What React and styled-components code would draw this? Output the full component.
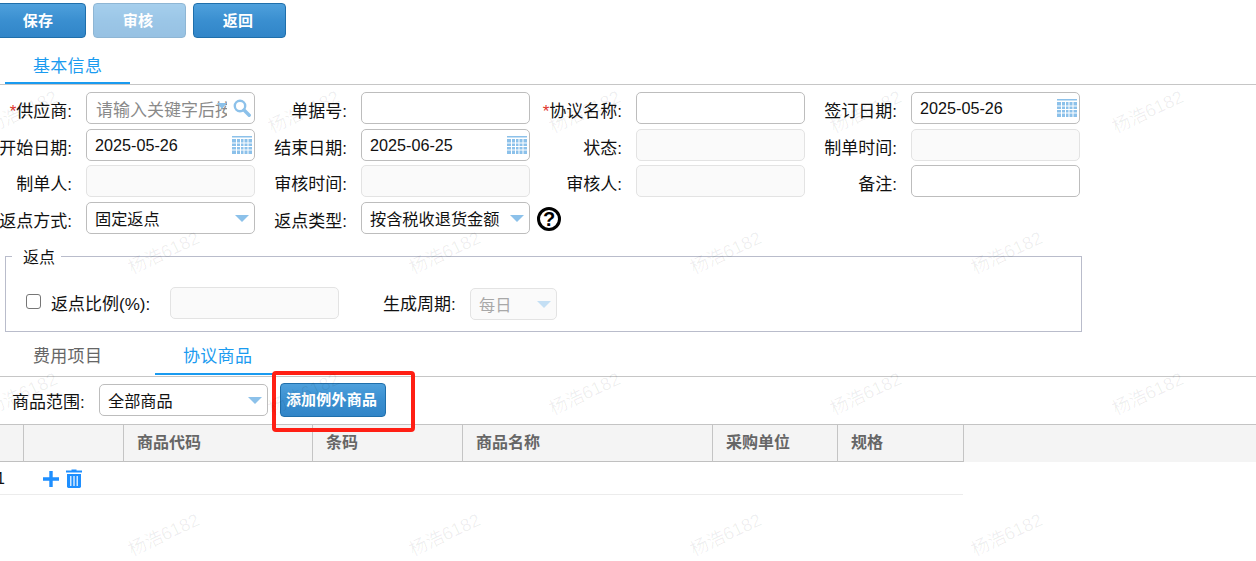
import React from "react";
import styled, { createGlobalStyle } from "styled-components";

const Global = createGlobalStyle`
  html, body { margin: 0; padding: 0; background: #fff; }
  body { font-family: "Liberation Sans", "Noto Sans CJK SC", sans-serif; font-size: 16px; color: #111; }
`;

const Page = styled.div`
  position: relative;
  width: 1256px;
  height: 561px;
  overflow: hidden;
  background: #fff;
`;

const Toolbar = styled.div`
  display: flex;
  gap: 7px;
  padding-top: 3px;
  margin-left: -7px;
`;

const ActionButton = styled.button`
  width: ${(p) => p.$width || 93}px;
  height: ${(p) => p.$height || 35}px;
  padding: 0 3px 3px 0;
  border: 1px solid #1f6fab;
  border-radius: 4px;
  background: linear-gradient(#4ea0dc, #3a8fd0 50%, #3185c8);
  color: #fff;
  font: bold 15px "Liberation Sans", "Noto Sans CJK SC", sans-serif;
  letter-spacing: 0.2px;
  white-space: nowrap;
  opacity: ${(p) => (p.disabled ? 0.5 : 1)};
`;

const TabBar = styled.div`
  display: flex;
  gap: 25px;
  height: ${(p) => p.$height}px;
  padding-left: 5px;
  padding-bottom: ${(p) => p.$lift || 0}px;
  align-items: flex-end;
  border-bottom: 1px solid #c6c6c6;
  box-sizing: border-box;
`;

const Tab = styled.div`
  width: 125px;
  height: 32px;
  box-sizing: border-box;
  padding-left: 28px;
  line-height: ${(p) => p.$line || 27}px;
  font-size: 17px;
  letter-spacing: 0.3px;
  white-space: nowrap;
  color: ${(p) => (p.$active ? "#1a9bf0" : "#666")};
  border-bottom: 2px solid ${(p) => (p.$active ? "#1a9bf0" : "transparent")};
`;

const FormGrid = styled.div`
  display: grid;
  grid-template-columns: repeat(4, 275px);
  grid-template-rows: 37px 36px 37px 32px;
  margin-top: 7px;
`;

const Field = styled.div`
  display: flex;
  align-items: flex-start;
`;

const Label = styled.div`
  width: 72px;
  margin-right: 14px;
  padding-top: 7px;
  line-height: 26px;
  font-size: 17px;
  white-space: nowrap;
  flex: none;
  display: flex;
  justify-content: flex-end;
`;

const Required = styled.span`
  color: #e0352b;
`;

const Box = styled.div`
  width: ${(p) => p.$width || 169}px;
  height: 32px;
  box-sizing: border-box;
  flex: none;
  display: flex;
  align-items: center;
  justify-content: space-between;
  padding: 0 5px 0 8px;
  border: 1px solid ${(p) => (p.$disabled ? "#e3e3e3" : "#bdbdbd")};
  border-radius: 5px;
  background: ${(p) => (p.$disabled ? "#fafafa" : "#fff")};
  color: ${(p) => (p.$disabled ? "#a8a8a8" : "#111")};
  font-size: 16.2px;
  white-space: nowrap;
`;

const DateText = styled.span`
  padding-top: 1px;
`;

const Placeholder = styled.span`
  width: 131px;
  overflow: hidden;
  margin-left: 1px;
  color: #8a8a8a;
  font-size: 17px;
`;

const SearchCluster = styled.span`
  position: relative;
  display: flex;
  align-items: center;
  margin-right: -2px;
`;

const HiddenArrow = styled.span`
  position: absolute;
  left: -16px;
  top: 4px;
  width: 0;
  height: 0;
  border-left: 5px solid transparent;
  border-right: 5px solid transparent;
  border-top: 6px solid #8cc1ea;
`;

const Arrow = styled.span`
  width: 0;
  height: 0;
  border-left: 7px solid transparent;
  border-right: 7px solid transparent;
  border-top: 7px solid ${(p) => (p.$faded ? "#c4dff4" : "#8cc1ea")};
`;

const Help = styled.span`
  width: 24px;
  height: 24px;
  box-sizing: border-box;
  flex: none;
  margin: 5px 0 0 7px;
  display: flex;
  align-items: center;
  justify-content: center;
  border: 3px solid #000;
  border-radius: 50%;
  font-weight: bold;
  font-size: 20px;
  color: #000;
`;

const RebateSet = styled.fieldset`
  width: 1077px;
  height: 88px;
  box-sizing: border-box;
  margin: 10px 0 0 5px;
  padding: 0;
  border: 1px solid #b9bccb;
  min-inline-size: 0;
`;

const RebateLegend = styled.legend`
  margin-left: 6px;
  padding: 4px 6px 0 11px;
  line-height: 20px;
  font-size: 16px;
`;

const RebateRow = styled.div`
  display: flex;
  align-items: flex-start;
  margin-top: 19px;
  padding-left: 20px;
`;

const Check = styled.input`
  appearance: none;
  width: 15px;
  height: 15px;
  margin: 7px 10px 0 0;
  flex: none;
  border: 1.5px solid #767676;
  border-radius: 3px;
  background: #fff;
`;

const RebateLabel = styled.div`
  width: ${(p) => p.$width}px;
  margin-left: ${(p) => p.$left || 0}px;
  margin-right: ${(p) => p.$gap}px;
  line-height: 22px;
  padding-top: 7px;
  font-size: 17px;
  white-space: nowrap;
`;

const CycleSelect = styled(Box)`
  margin-top: 1px;
`;

const FilterRow = styled.div`
  display: flex;
  align-items: flex-start;
  height: 47px;
  padding: 6px 0 0 12px;
  box-sizing: border-box;
`;

const FilterLabel = styled.div`
  width: 72px;
  margin-right: 15px;
  padding-top: 7px;
  line-height: 26px;
  font-size: 17px;
  white-space: nowrap;
`;

const FilterSelect = styled(Box)`
  margin: 1px 12px 0 0;
`;

const FilterButton = styled(ActionButton)`
  padding-left: 0;
`;

const HeaderBar = styled.div`
  display: flex;
  height: 38px;
  box-sizing: border-box;
  background: #f4f4f4;
  border-top: 1px solid #c4c4c4;
`;

const HeaderCell = styled.div`
  width: ${(p) => p.$w}px;
  flex: none;
  box-sizing: border-box;
  padding-left: 13px;
  line-height: 36px;
  font-weight: bold;
  color: #666;
  border-right: 1px solid #c4c4c4;
  border-bottom: 1px solid #c0c0c0;
`;

const DataRow = styled.div`
  display: flex;
  align-items: center;
  width: 963px;
  height: 33px;
  padding-top: 1px;
  box-sizing: border-box;
  border-bottom: 1px solid #ececec;
`;

const RowIndex = styled.div`
  width: 47px;
  margin-left: -4px;
  flex: none;
  font-size: 16px;
`;

const RowIcons = styled.div`
  display: flex;
  align-items: center;
  gap: 7px;
`;

const Highlight = styled.div`
  position: absolute;
  left: 272px;
  top: 371px;
  width: 143px;
  height: 61px;
  box-sizing: border-box;
  border: 4px solid #ff1f14;
  border-radius: 4px;
  pointer-events: none;
`;

const Watermark = styled.div`
  position: absolute;
  transform: translate(-50%, -50%) rotate(-25deg);
  font-size: 18px;
  white-space: nowrap;
  color: rgba(0, 0, 0, 0.065);
  pointer-events: none;
`;

const CalendarSvg = styled.svg`
  margin-right: -3px;
  flex: none;
`;

const CalendarIcon = () => (
  <CalendarSvg width="20" height="18" viewBox="0 0 20 18">
    <rect x="0" y="0" width="20" height="1.5" fill="#8cc1ea" />
    <rect x="0" y="3" width="20" height="15" fill="#8cc1ea" />
    <path d="M4.5 3v15M8.5 3v15M12 3v15M16 3v15M0 7h20M0 10.5h20M0 14h20" stroke="#fff" strokeWidth="1" />
  </CalendarSvg>
);

const SearchIcon = () => (
  <svg width="18" height="18" viewBox="0 0 18 18" fill="none">
    <circle cx="7" cy="7" r="5.2" stroke="#8cc1ea" strokeWidth="2.4" />
    <path d="M11 11l5.2 5.2" stroke="#8cc1ea" strokeWidth="3.4" strokeLinecap="round" />
  </svg>
);

const PlusIcon = () => (
  <svg width="16" height="16" viewBox="0 0 16 16">
    <path d="M8 0v16M0 8h16" stroke="#1e8fff" strokeWidth="3.4" />
  </svg>
);

const TrashIcon = () => (
  <svg width="16" height="19" viewBox="0 0 16 19">
    <path d="M5.5 1.5V.6h5v.9H16v2H0v-2z" fill="#1e8fff" />
    <path d="M1 5h14v12.6a1.4 1.4 0 0 1-1.4 1.4H2.4A1.4 1.4 0 0 1 1 17.6z" fill="#1e8fff" />
    <path d="M4.8 7v10M8 7v10M11.2 7v10" stroke="#fff" strokeWidth="1.2" />
  </svg>
);

const marks = [
  ...[21, 303, 584, 865, 1147].flatMap((x) => [[x, 110], [x, 392]]),
  ...[163, 444, 725, 1006].flatMap((x) => [[x, 251], [x, 533]]),
];

const columns = [
  [24, ""],
  [100, ""],
  [189, "商品代码"],
  [150, "条码"],
  [250, "商品名称"],
  [125, "采购单位"],
  [126, "规格"],
];

export default function App() {
  return (
    <Page>
      <Global />
      <Toolbar>
        <ActionButton>保存</ActionButton>
        <ActionButton disabled>审核</ActionButton>
        <ActionButton>返回</ActionButton>
      </Toolbar>
      <TabBar $height={47}>
        <Tab $active $line={29}>基本信息</Tab>
      </TabBar>
      <FormGrid>
        <Field>
          <Label><Required>*</Required>供应商:</Label>
          <Box>
            <Placeholder>请输入关键字后按键</Placeholder>
            <SearchCluster><HiddenArrow /><SearchIcon /></SearchCluster>
          </Box>
        </Field>
        <Field><Label>单据号:</Label><Box /></Field>
        <Field><Label><Required>*</Required>协议名称:</Label><Box /></Field>
        <Field><Label>签订日期:</Label><Box><DateText>2025-05-26</DateText><CalendarIcon /></Box></Field>

        <Field><Label>开始日期:</Label><Box><DateText>2025-05-26</DateText><CalendarIcon /></Box></Field>
        <Field><Label>结束日期:</Label><Box><DateText>2025-06-25</DateText><CalendarIcon /></Box></Field>
        <Field><Label>状态:</Label><Box $disabled /></Field>
        <Field><Label>制单时间:</Label><Box $disabled /></Field>

        <Field><Label>制单人:</Label><Box $disabled /></Field>
        <Field><Label>审核时间:</Label><Box $disabled /></Field>
        <Field><Label>审核人:</Label><Box $disabled /></Field>
        <Field><Label>备注:</Label><Box /></Field>

        <Field><Label>返点方式:</Label><Box>固定返点<Arrow /></Box></Field>
        <Field>
          <Label>返点类型:</Label>
          <Box>按含税收退货金额<Arrow /></Box>
          <Help>?</Help>
        </Field>
      </FormGrid>
      <RebateSet>
        <RebateLegend>返点</RebateLegend>
        <RebateRow>
          <Check type="checkbox" />
          <RebateLabel $width={98} $gap={21}>返点比例(%):</RebateLabel>
          <Box $disabled />
          <RebateLabel $width={72} $left={44} $gap={15}>生成周期:</RebateLabel>
          <CycleSelect $disabled $width={87}>每日<Arrow $faded /></CycleSelect>
        </RebateRow>
      </RebateSet>
      <TabBar $height={45} $lift={1}>
        <Tab>费用项目</Tab>
        <Tab $active>协议商品</Tab>
      </TabBar>
      <FilterRow>
        <FilterLabel>商品范围:</FilterLabel>
        <FilterSelect>全部商品<Arrow /></FilterSelect>
        <FilterButton $width={106} $height={34}>添加例外商品</FilterButton>
      </FilterRow>
      <HeaderBar>
        {columns.map(([w, text], i) => (
          <HeaderCell key={i} $w={w}>{text}</HeaderCell>
        ))}
      </HeaderBar>
      <DataRow>
        <RowIndex>1</RowIndex>
        <RowIcons><PlusIcon /><TrashIcon /></RowIcons>
      </DataRow>
      <Highlight />
      {marks.map(([x, y]) => (
        <Watermark key={`${x}-${y}`} style={{ left: x, top: y }}>杨浩6182</Watermark>
      ))}
    </Page>
  );
}
